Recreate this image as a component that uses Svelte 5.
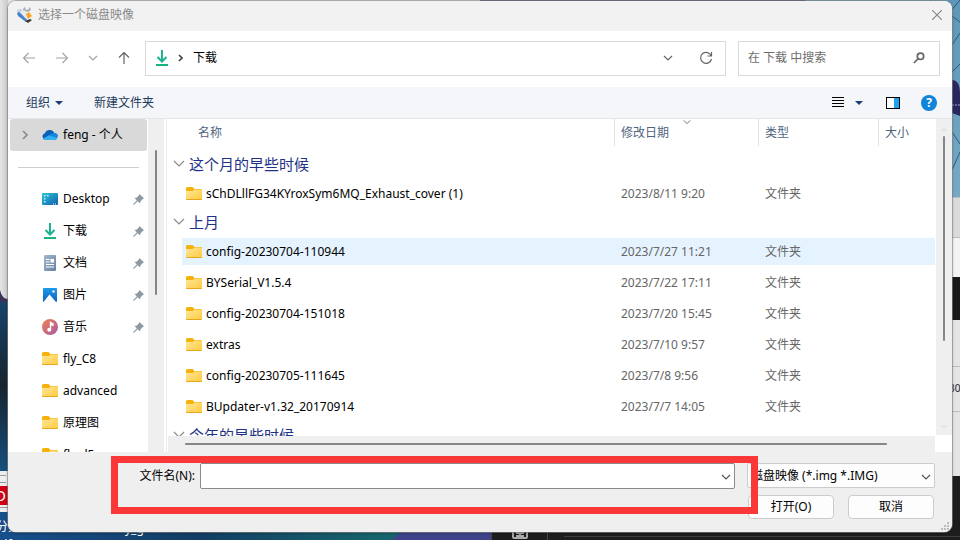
<script>
  const places = [
    { name: 'Desktop', icon: 'desktop', pinned: true },
    { name: '下载', icon: 'download', pinned: true },
    { name: '文档', icon: 'document', pinned: true },
    { name: '图片', icon: 'picture', pinned: true },
    { name: '音乐', icon: 'music', pinned: true },
    { name: 'fly_C8', icon: 'folder', pinned: false },
    { name: 'advanced', icon: 'folder', pinned: false },
    { name: '原理图', icon: 'folder', pinned: false },
    { name: 'fly-d5', icon: 'folder', pinned: false }
  ];

  const groups = [
    {
      title: '这个月的早些时候',
      files: [{ name: 'sChDLllFG34KYroxSym6MQ_Exhaust_cover (1)', date: '2023/8/11 9:20' }]
    },
    {
      title: '上月',
      files: [
        { name: 'config-20230704-110944', date: '2023/7/27 11:21' },
        { name: 'BYSerial_V1.5.4', date: '2023/7/22 17:11' },
        { name: 'config-20230704-151018', date: '2023/7/20 15:45' },
        { name: 'extras', date: '2023/7/10 9:57' },
        { name: 'config-20230705-111645', date: '2023/7/8 9:56' },
        { name: 'BUpdater-v1.32_20170914', date: '2023/7/7 14:05' }
      ]
    },
    { title: '今年的早些时候', files: [] }
  ];

  let selected = $state('config-20230704-110944');
  let fileName = $state('');
  let query = $state('');
</script>

{#snippet chevron()}
  <svg class="chevron" width="10" height="6" viewBox="0 0 10 6"><path d="M1 1l4 4 4-4" /></svg>
{/snippet}

{#snippet icon(kind)}
  <svg class="icon" width="16" height="16" viewBox="0 0 16 16" aria-hidden="true">
    {#if kind === 'folder'}
      <path d="M0 2.500A1.500 1.500 0 0 1 1.500 1h5L8.500 3H15a1 1 0 0 1 1 1v6H0z" fill="#f3b30c" />
      <path d="M0 5h7l1.500-1.500H15a1 1 0 0 1 1 1V13a1 1 0 0 1-1 1H1a1 1 0 0 1-1-1z" fill="url(#folderFill)" />
      <path d="M0 13h16a1 1 0 0 1-1 1H1a1 1 0 0 1-1-1z" fill="#eaa61c" />
    {:else if kind === 'desktop'}
      <rect y="2" width="16" height="12" rx="1" fill="url(#deskFill)" />
      <path d="M2 4h1.500v1.500H2zM2 7h1.500v1.500H2zM2 10h1.500v1.500H2zM5 4h1.500v1.500H5z" fill="#b8f5fb" />
      <path d="M11 12.500h1v1h-1zM13 12.500h1v1h-1z" fill="#fff" />
    {:else if kind === 'download'}
      <path d="M8 0v11M3.500 7L8 11.500 12.500 7" fill="none" stroke="#1bb391" stroke-width="2" />
      <path d="M2 15h12" stroke="#16b483" stroke-width="2" />
    {:else if kind === 'document'}
      <rect x="2" width="12" height="16" rx="1" fill="url(#docFill)" />
      <path d="M4 4.500h3.500M4 7h3.500M4 9.500h8M4 12h8" stroke="#fff" stroke-width="1.200" />
      <rect x="8.500" y="4" width="3.500" height="3.500" fill="#fff" />
    {:else if kind === 'picture'}
      <rect x="1" y="1" width="14" height="14" rx="1" fill="url(#picFill)" />
      <path d="M1.500 15l6-7.500 6.500 7.500z" fill="#fff" />
      <circle cx="11.500" cy="4.500" r="1.300" fill="#d8f5ff" />
    {:else if kind === 'music'}
      <circle cx="8" cy="8" r="8" fill="url(#musicFill)" />
      <path d="M8.500 10.500V3.500l2.500 1.300v1.500l-2-.8" fill="none" stroke="#fff" stroke-width="1.400" />
      <circle cx="7.200" cy="10.800" r="2" fill="#fff" />
    {:else if kind === 'cloud'}
      <path d="M3.500 13A3.500 3.500 0 0 1 3 6.200 5 5 0 0 1 12.300 6 3.600 3.600 0 0 1 12.500 13z" fill="#0a5fb8" />
      <path d="M6 8.500l3-1.500a4 4 0 0 1 3.500-1A3.500 3.500 0 0 1 16 9.500L12 13H4z" fill="#1687dc" />
      <path d="M1 11.500l6-3 8.500 2.600A3 3 0 0 1 13 13H3.500A3.500 3.500 0 0 1 1 11.500z" fill="#32b0f2" />
    {/if}
  </svg>
{/snippet}

<div class="desktop">
  <svg class="wallpaper" viewBox="0 0 960 540" preserveAspectRatio="xMidYMid slice" aria-hidden="true">
    <defs>
      <linearGradient id="folderFill" x2="1" y2="1"><stop stop-color="#ffe69a" /><stop offset="1" stop-color="#ffcb3d" /></linearGradient>
      <linearGradient id="deskFill" x2="1" y2="1"><stop stop-color="#2fc6d8" /><stop offset="1" stop-color="#0f5fae" /></linearGradient>
      <linearGradient id="docFill" x2="1" y2="1"><stop stop-color="#a5b8cf" /><stop offset="1" stop-color="#66819f" /></linearGradient>
      <linearGradient id="picFill" x2="0" y2="1"><stop stop-color="#1e9be8" /><stop offset="1" stop-color="#0d62bd" /></linearGradient>
      <linearGradient id="musicFill" x2="1" y2="1"><stop stop-color="#ef8250" /><stop offset="1" stop-color="#a85aa6" /></linearGradient>
      <linearGradient id="shade"><stop stop-color="#e6e6e6" /><stop offset="1" stop-color="#c9c9c9" /></linearGradient>
      <linearGradient id="sea" x2="0" y2="1"><stop stop-color="#17446b" /><stop offset=".5" stop-color="#16242f" /><stop offset="1" stop-color="#17507f" /></linearGradient>
      <linearGradient id="shore"><stop stop-color="#174f8c" /><stop offset=".5" stop-color="#123e64" /><stop offset="1" stop-color="#17686c" /></linearGradient>
      <linearGradient id="cloth" x2="0" y2="1"><stop stop-color="#5d97b8" /><stop offset="1" stop-color="#76a9c4" /></linearGradient>
    </defs>
    <rect width="960" height="540" fill="#1d1d1e" />
    <rect width="480" height="300" fill="#e4e4e4" />
    <rect width="8" height="300" fill="url(#shade)" />
    <rect x="480" width="325" height="4" fill="#3d3562" />
    <rect x="805" width="155" height="197" fill="url(#cloth)" />
    <path d="M930 0l30 22M950 12l10-12M952 45l8-12M952 72l8-8M952 170l8-18M952 132l8 12" stroke="#2c5a7c" stroke-width="1" fill="none" />
    <path d="M952 80q8 0 8 14v22l-8-3z" fill="#292760" />
    <path d="M952 105h8" stroke="#a9a3cd" stroke-dasharray="2 1" />
    <rect x="950" y="197" width="10" height="40" fill="#dadada" />
    <rect x="950" y="238" width="10" height="39" fill="#f3f3f3" />
    <rect x="950" y="277" width="10" height="43" fill="#181818" />
    <rect x="950" y="320" width="10" height="156" fill="#e4e4e4" />
    <path d="M950 197.500h10M950 237.500h10M950 366.500h10M950 411.500h10" stroke="#bdbdbd" />
    <text x="949" y="392" class="scrap small">30</text>
    <rect y="300" width="8" height="172" fill="url(#sea)" />
    <path d="M0 290q2 9 8 9v3H0z" fill="#3b3357" />
    <rect y="471" width="10" height="41" fill="#eeeeee" />
    <path d="M0 475.500h6M0 482.500h6M0 507.500h8" stroke="#999" />
    <rect y="486" width="10" height="19" fill="#cf0015" />
    <text x="-5" y="501" class="scrap light large">D</text>
    <rect y="512" width="400" height="28" fill="url(#shore)" />
    <path d="M391 540l13-10h87v10z" fill="#3e438b" />
    <text x="-4" y="531" class="scrap light">分类</text>
    <text x="0" y="549" class="scrap light">df</text>
    <text x="125" y="533" class="scrap light">y_g</text>
    <path d="M491.500 532v8M547.500 532v8" stroke="#444" />
    <path d="M564 536.500h396" stroke="#3c3c3e" />
    <path d="M513 531v6q0 1 1 1h12q1 0 1-1v-6M516 533h8M516 536h8M520 531v6" stroke="#aaa" stroke-width="2" fill="none" />
  </svg>

  <main class="dialog">
    <header class="titlebar">
      <svg width="17" height="16" viewBox="0 0 17 16" aria-hidden="true">
        <path d="M1 3l4-1 7 6-2 5-8-6z" fill="#c3d0de" />
        <path d="M1 6l2-1 8 7-1 3-8-6z" fill="#4c83c8" />
        <path d="M4 5l4-2 5 6-3 3z" fill="#e6ebf0" />
        <path d="M10 7l3-2 3 4-4 3z" fill="#f9a62b" />
        <path d="M9 0l1 3 3-1V0q3 2 1 4l-3 1-4-2q0-2 2-3z" fill="#a9b0b6" />
        <path d="M9 14l5-2 2 1-4 3z" fill="#3a3835" />
      </svg>
      <h1>选择一个磁盘映像</h1>
      <button class="plain close" aria-label="关闭">
        <svg width="10" height="10" viewBox="0 0 10 10"><path d="M0 0l10 10M10 0L0 10" /></svg>
      </button>
    </header>

    <nav class="navbar">
      <div class="history">
        <button class="plain faded" aria-label="后退"><svg width="12" height="12" viewBox="0 0 12 12"><path d="M12 6H.800M5.500 1L.500 6l5 5" /></svg></button>
        <button class="plain faded" aria-label="前进"><svg width="12" height="12" viewBox="0 0 12 12"><path d="M0 6h11.200M6.500 1l5 5-5 5" /></svg></button>
        <button class="plain faded narrow" aria-label="最近位置">{@render chevron()}</button>
        <button class="plain" aria-label="上一级"><svg width="12" height="12" viewBox="0 0 12 12"><path d="M6 12V.800M1 5.500l5-5 5 5" /></svg></button>
      </div>
      <div class="address">
        {@render icon('download')}
        <svg class="crumb" width="5" height="8" viewBox="0 0 5 8"><path d="M1 1l3 3-3 3" /></svg>
        <a href="#downloads">下载</a>
        <button class="plain" aria-label="历史记录">{@render chevron()}</button>
        <button class="plain" aria-label="刷新">
          <svg width="14" height="14" viewBox="0 0 14 14"><path d="M12.300 5A5.500 5.500 0 1 0 12.500 8M12.500 1v4h-4" /></svg>
        </button>
      </div>
      <label class="search">
        <input type="text" placeholder="在 下载 中搜索" aria-label="在 下载 中搜索" bind:value={query} />
        <svg width="12" height="12" viewBox="0 0 12 12"><circle cx="7.500" cy="4.300" r="3.200" /><path d="M5 6.800L.800 11" /></svg>
      </label>
    </nav>

    <div class="toolbar">
      <button class="plain">组织 <span class="caret"></span></button>
      <button class="plain">新建文件夹</button>
      <button class="plain view" aria-label="更改视图">
        <svg width="12" height="11" viewBox="0 0 12 11"><path d="M0 .500h12M0 3.500h12M0 6.500h12M0 9.500h12" /></svg>
        <span class="caret"></span>
      </button>
      <button class="plain" aria-label="预览窗格">
        <svg width="14" height="12" viewBox="0 0 14 12"><rect width="14" height="12" fill="#fff" stroke="none" /><rect x="8" width="6" height="12" fill="#1fa2ee" stroke="none" /><rect x=".500" y=".500" width="13" height="11" /></svg>
      </button>
      <button class="plain help" aria-label="帮助">?</button>
    </div>

    <section class="browser">
      <aside class="sidebar">
        <a class="place account" href="#feng">
          <svg class="expand" width="6" height="10" viewBox="0 0 6 10"><path d="M1 1l4 4-4 4" /></svg>
          {@render icon('cloud')}<span>feng - 个人</span>
        </a>
        <hr />
        {#each places as place}
          <a class="place" href="#{place.icon}">
            {@render icon(place.icon)}<span>{place.name}</span>
            {#if place.pinned}
              <svg class="pin" width="11" height="11" viewBox="0 0 11 11"><path d="M6.500 0L11 4.500 9.800 5 7.500 7.200 7.200 9.500 4.600 7.200 .800 11 0 10.200 3.800 6.400 1.500 4 4 3.600 6 1.300z" /></svg>
            {/if}
          </a>
        {/each}
      </aside>
      <div class="track side"><span class="thumb"></span></div>

      <div class="listing">
        <div class="rows">
          <table>
            <colgroup><col /><col class="date" /><col class="type" /><col class="size" /></colgroup>
            <thead>
              <tr><th>名称</th><th>修改日期<span class="sort">{@render chevron()}</span></th><th>类型</th><th>大小</th></tr>
            </thead>
            {#each groups as group}
              <tbody>
                <tr class="group">
                  <th colspan="4">
                    <span><svg class="fold" width="12" height="7" viewBox="0 0 12 7"><path d="M1 1l5 5 5-5" /></svg>{group.title}</span>
                  </th>
                </tr>
                {#each group.files as file}
                  <tr class="file" class:selected={file.name === selected} onclick={() => (selected = file.name)}>
                    <td><span>{@render icon('folder')}{file.name}</span></td>
                    <td>{file.date}</td>
                    <td>文件夹</td>
                    <td></td>
                  </tr>
                {/each}
              </tbody>
            {/each}
          </table>
        </div>
        <div class="track bottom"><span class="thumb"></span></div>
      </div>

      <div class="edge">
        <div class="track right"><span class="arrow up"></span><span class="thumb"></span><span class="arrow down"></span></div>
      </div>
    </section>

    <footer>
      <div class="fields">
        <label for="file-name">文件名(N):</label>
        <div class="combo name"><input id="file-name" type="text" bind:value={fileName} />{@render chevron()}</div>
        <div class="combo filter">
          <select aria-label="文件类型"><option>磁盘映像 (*.img *.IMG)</option></select>{@render chevron()}
        </div>
      </div>
      <div class="actions">
        <button>打开(O)</button>
        <button>取消</button>
      </div>
      <div class="marker"></div>
      <svg class="grip" width="9" height="9" viewBox="0 0 9 9"><path d="M6 0h2v2H6zM3 3h2v2H3zM6 3h2v2H6zM0 6h2v2H0zM3 6h2v2H3zM6 6h2v2H6z" /></svg>
    </footer>
  </main>
</div>

<style>
  .desktop {
    position: relative;
    box-sizing: border-box;
    display: flex;
    height: 100vh;
    padding: 1px 8px 8px;
    overflow: hidden;
    font: 12px/16px 'Noto Sans', 'Noto Sans CJK SC', sans-serif;
    color: #000;
  }
  .desktop * { box-sizing: border-box; }
  .wallpaper { position: absolute; inset: 0; width: 100%; height: 100%; }
  .scrap { font-size: 12px; fill: #222; }
  .small { font-size: 10px; }
  .light { fill: #fff; }
  .large { font-size: 15px; }

  .dialog {
    position: relative;
    flex: 1;
    min-width: 0;
    display: flex;
    flex-direction: column;
    overflow: hidden;
    background: #fff;
    border-radius: 8px;
    box-shadow: 0 0 0 1px #8889, 0 1px 3px #0006;
  }
  button, input, select { font: inherit; color: inherit; }
  a { color: inherit; text-decoration: none; }
  svg { flex: none; }
  .plain {
    display: flex;
    align-items: center;
    justify-content: center;
    padding: 0;
    border: 0;
    background: none;
  }
  .plain svg, .chevron, .search svg, .crumb, .expand, .fold { fill: none; stroke: #666; stroke-width: 1.2; }
  .fold { stroke: #8a8a8a; }

  .titlebar { display: flex; align-items: center; gap: 5px; height: 30px; padding: 0 10px 2px 8px; background: #f2f2f2; }
  h1 { flex: 1; margin: 0; font-size: 12px; font-weight: 400; color: #8b8b8b; }
  .close svg { stroke: #888; }

  .navbar { display: flex; align-items: center; gap: 12px; height: 56px; padding: 0 12px 2px 14px; }
  .history { display: flex; align-items: center; justify-content: space-between; width: 111px; padding-right: 2px; }
  .history .plain { width: 14px; height: 24px; }
  .history .narrow { width: 10px; }
  .faded { opacity: .6; }
  .address, .search { display: flex; align-items: center; height: 35px; border: 1px solid #d9d9d9; }
  .address { flex: 1; gap: 8px; padding: 0 12px 0 8px; }
  .crumb { stroke: #444; stroke-width: 1.6; }
  .address a { flex: 1; padding-left: 2px; }
  .address .plain { width: 14px; margin-left: 16px; }
  .search { width: 202px; padding: 0 14px 0 9px; }
  .search input { flex: 1; min-width: 0; padding: 0; border: 0; outline: 0; background: none; }
  .search input::placeholder { color: #6d6d6d; opacity: 1; }
  .search svg { stroke: #666; stroke-width: 1.7; }

  .toolbar {
    display: flex;
    align-items: center;
    height: 32px;
    padding: 0 15px 0 18px;
    border-bottom: 1px solid #e4e6e9;
    background: #f4f6f9;
    color: #1e395b;
  }
  .toolbar .plain { gap: 5px; margin-right: 31px; }
  .toolbar .plain svg { stroke: #000; stroke-width: 1; }
  .toolbar .view { gap: 11px; margin: 0 23px 0 auto; }
  .toolbar .view ~ .plain { margin-right: 21px; }
  .caret { border: 4px solid transparent; border-top-color: #1c3f75; border-bottom: 0; }
  .toolbar .view ~ .help { width: 16px; height: 16px; margin: 0; border-radius: 50%; background: #0f84d8; color: #fff; font-weight: 700; }

  .browser { flex: 1; display: flex; min-height: 0; }
  .sidebar { width: 140px; overflow: hidden; }
  .place { display: flex; align-items: center; gap: 5px; height: 32px; padding: 0 4px 0 34px; }
  .account { margin: 0 1px 0 2px; padding-left: 12px; border-radius: 3px; background: #d9d9d9; }
  .expand { margin-right: 9px; stroke: #8a8a8a; stroke-width: 1.6; }
  hr { height: 1px; margin: 16px 9px 15px 10px; border: 0; background: #cfcfcf; }
  .pin { margin-left: auto; fill: #8e98a2; }

  .track { background: #efefef; display: flex; }
  .thumb { border-radius: 1px; background: #868686; }
  .side { width: 16px; padding: 31px 0 0 7px; }
  .side .thumb { width: 2px; height: 48%; }
  .listing { flex: 1; min-width: 0; display: flex; flex-direction: column; margin-left: 2px; border-left: 1px solid #ededed; }
  .rows { flex: 1; min-height: 0; overflow: hidden; padding-right: 1px; }
  .bottom { height: 16px; margin: 0 1px; padding: 7px 48px 0 17px; }
  .bottom .thumb { flex: 1; height: 2px; }
  .edge { width: 16px; padding-bottom: 17px; display: flex; }
  .right { flex: 1; flex-direction: column; align-items: center; padding: 8px 0 6px; }
  .right .thumb { width: 2px; height: 68%; margin: 5px 0 auto; }
  .arrow { border: 4px solid transparent; }
  .up { border-bottom-color: #e5e5e5; border-top: 0; }
  .down { border-top-color: #e5e5e5; border-bottom: 0; }

  table { width: 100%; table-layout: fixed; border-spacing: 0; }
  .date { width: 144px; }
  .type { width: 120px; }
  .size { width: 57px; }
  th, td { padding: 0 0 0 6px; text-align: left; font-weight: 400; white-space: nowrap; }
  thead th { position: relative; height: 27px; border-left: 1px solid #e2e2e2; color: #4f6580; }
  thead th:first-child { padding-left: 31px; border: 0; }
  thead + tbody::before { content: ''; display: block; height: 5px; }
  .sort { position: absolute; top: 0; left: 68px; display: flex; }
  .sort .chevron { width: 8px; }
  .group th { height: 27px; padding-bottom: 2px; color: #1e3287; font-size: 15px; line-height: 20px; }
  .group span, .file span { display: flex; align-items: center; gap: 4px; }
  .file td { height: 31px; padding-left: 7px; border: 2px solid transparent; border-width: 2px 0; background-clip: padding-box; color: #666; }
  .file td:first-child { padding-left: 4px; border-left-width: 15px; border-radius: 2px; color: #000; }
  .selected td { background-color: #e5f3ff; }

  footer { position: relative; height: 80px; padding: 11px 17px 0 0; background: #efefef; }
  .fields { display: flex; }
  .fields label { width: 192px; padding-right: 5px; text-align: right; line-height: 26px; }
  .combo { position: relative; }
  .combo .chevron { position: absolute; top: 11px; right: 4px; stroke: #555; }
  .name { flex: 1; margin-right: 12px; }
  .name input { width: 100%; height: 26px; padding: 0 20px 0 5px; border: 1px solid #8a8a8a; border-radius: 2px; background: #fff; outline: 0; }
  .filter { width: 188px; }
  .filter select { display: block; width: 100%; height: 25px; padding: 0 18px 0 3px; border: 1px solid #ccc; border-radius: 2px; background: #fdfdfd; appearance: none; }
  .actions { display: flex; justify-content: flex-end; gap: 14px; margin-top: 6px; padding-right: 1px; }
  .actions button { width: 86px; height: 24px; padding: 0; border: 1px solid #ccc; border-radius: 4px; background: #fdfdfd; }
  .marker { position: absolute; top: 4px; left: 103px; right: 194px; height: 58px; border: 7px solid #fb3838; pointer-events: none; }
  .grip { position: absolute; right: 2px; bottom: 1px; fill: #bdbdbd; }
</style>
